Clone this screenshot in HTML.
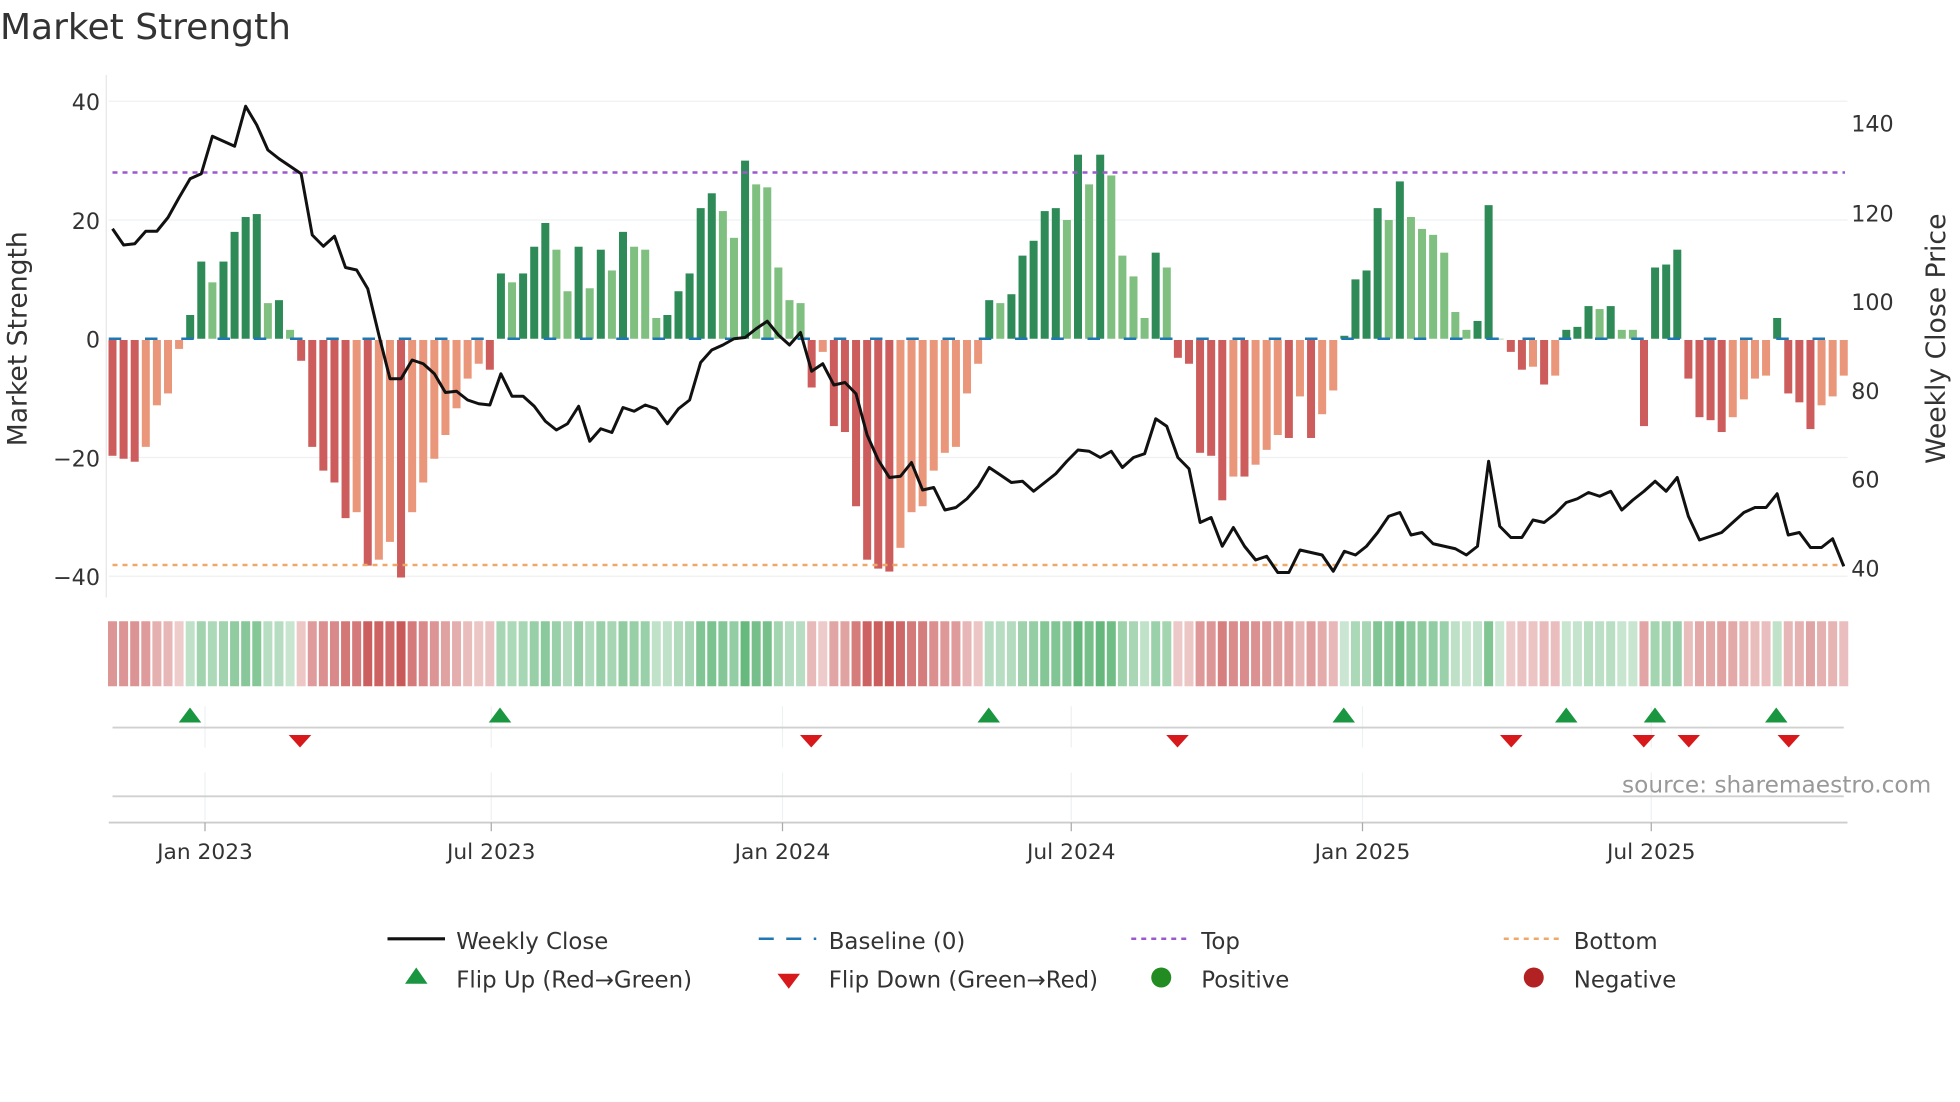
<!DOCTYPE html>
<html><head><meta charset="utf-8"><style>
html,body{margin:0;padding:0;background:#fff;}
svg{display:block;font-family:"DejaVu Sans","Liberation Sans",sans-serif;}
</style></head><body>
<svg id="s" width="1960" height="1102" viewBox="0 0 1568 881.6" preserveAspectRatio="none" xmlns="http://www.w3.org/2000/svg">
<rect width="1568" height="882" fill="#fff"/>
<text x="0" y="31" font-size="28.8" fill="#333">Market Strength</text>
<g stroke="#eef0f2" stroke-width="1">
<line x1="87" y1="81" x2="1478" y2="81"/><line x1="87" y1="176" x2="1478" y2="176"/>
<line x1="87" y1="366" x2="1478" y2="366"/><line x1="87" y1="461" x2="1478" y2="461"/>
</g>
<line x1="85" y1="60" x2="85" y2="478" stroke="#e6e6e6"/>
<g font-size="17.8" fill="#333" text-anchor="end">
<text x="80" y="88">40</text><text x="80" y="183">20</text><text x="80" y="278">0</text>
<text x="80" y="373">−20</text><text x="80" y="468">−40</text>
</g>
<g font-size="17.8" fill="#333">
<text x="1481" y="105">140</text><text x="1481" y="177">120</text><text x="1481" y="248">100</text>
<text x="1481" y="319">80</text><text x="1481" y="390">60</text><text x="1481" y="461">40</text>
</g>
<text transform="translate(21,271) rotate(-90)" font-size="21.3" fill="#333" text-anchor="middle">Market Strength</text>
<text transform="translate(1556,271) rotate(-90)" font-size="21.3" fill="#333" text-anchor="middle">Weekly Close Price</text>
<g id="bars"></g>
<line x1="87" y1="271" x2="1478" y2="271" stroke="#1f77b4" stroke-width="2" stroke-dasharray="10,19"/>
<line x1="90" y1="138" x2="1476" y2="138" stroke="#9b59d0" stroke-width="2" stroke-dasharray="4,4"/>
<line x1="90" y1="452" x2="1476" y2="452" stroke="#f0a868" stroke-width="2" stroke-dasharray="4,4"/>
<polyline id="price" fill="none" stroke="#111" stroke-width="2.4" stroke-linejoin="round"/>
<g id="heat"></g>
<g stroke="#eef0f2"><line x1="164" y1="565" x2="164" y2="598"/><line x1="393" y1="565" x2="393" y2="598"/><line x1="626" y1="565" x2="626" y2="598"/><line x1="857" y1="565" x2="857" y2="598"/><line x1="1090" y1="565" x2="1090" y2="598"/><line x1="1321" y1="565" x2="1321" y2="598"/>
<line x1="164" y1="618" x2="164" y2="656"/><line x1="393" y1="618" x2="393" y2="656"/><line x1="626" y1="618" x2="626" y2="656"/><line x1="857" y1="618" x2="857" y2="656"/><line x1="1090" y1="618" x2="1090" y2="656"/><line x1="1321" y1="618" x2="1321" y2="656"/></g>
<line x1="90" y1="582" x2="1475" y2="582" stroke="#d0d0d0" stroke-width="1.5"/>
<line x1="90" y1="637" x2="1475" y2="637" stroke="#d0d0d0" stroke-width="1.5"/>
<line x1="87" y1="658" x2="1478" y2="658" stroke="#ccc" stroke-width="1.5"/>
<g stroke="#aaa"><line x1="164" y1="658" x2="164" y2="665"/><line x1="393" y1="658" x2="393" y2="665"/><line x1="626" y1="658" x2="626" y2="665"/><line x1="857" y1="658" x2="857" y2="665"/><line x1="1090" y1="658" x2="1090" y2="665"/><line x1="1321" y1="658" x2="1321" y2="665"/></g>
<g id="flips"></g>
<g font-size="17.4" fill="#333" text-anchor="middle">
<text x="164" y="687">Jan 2023</text><text x="393" y="687">Jul 2023</text><text x="626" y="687">Jan 2024</text>
<text x="857" y="687">Jul 2024</text><text x="1090" y="687">Jan 2025</text><text x="1321" y="687">Jul 2025</text>
</g>
<text x="1545" y="634" font-size="18.6" fill="#999" text-anchor="end">source: sharemaestro.com</text>
<g font-size="18.3" fill="#333">
<line x1="310" y1="751" x2="356" y2="751" stroke="#111" stroke-width="2.5"/>
<text x="365" y="759">Weekly Close</text>
<line x1="607" y1="751" x2="653" y2="751" stroke="#1f77b4" stroke-width="2" stroke-dasharray="12,10"/>
<text x="663" y="759">Baseline (0)</text>
<line x1="905" y1="751" x2="950" y2="751" stroke="#9b59d0" stroke-width="2" stroke-dasharray="4,4"/>
<text x="961" y="759">Top</text>
<line x1="1203" y1="751" x2="1248" y2="751" stroke="#f0a868" stroke-width="2" stroke-dasharray="4,4"/>
<text x="1259" y="759">Bottom</text>
<polygon points="333,774 342,787 324,787" fill="#1a9641"/>
<text x="365" y="790">Flip Up (Red→Green)</text>
<polygon points="622,779 640,779 631,791" fill="#d7191c"/>
<text x="663" y="790">Flip Down (Green→Red)</text>
<circle cx="929" cy="782" r="8" fill="#228b22"/>
<text x="961" y="790">Positive</text>
<circle cx="1227" cy="782" r="8" fill="#b22222"/>
<text x="1259" y="790">Negative</text>
</g>
</svg>
<script>
var V=[[-19.5,1],[-20,1],[-20.5,1],[-18,0],[-11,0],[-9,0],[-1.5,0],[4,1],[13,1],[9.5,0],[13,1],[18,1],[20.5,1],[21,1],[6,0],[6.5,1],[1.5,0],
[-3.5,1],[-18,1],[-22,1],[-24,1],[-30,1],[-29,0],[-38,1],[-37,0],[-34,0],[-40,1],[-29,0],[-24,0],[-20,0],[-16,0],[-11.5,0],[-6.5,0],[-4,0],[-5,1],
[11,1],[9.5,0],[11,1],[15.5,1],[19.5,1],[15,0],[8,0],[15.5,1],[8.5,0],[15,1],[11.5,0],[18,1],[15.5,0],[15,0],[3.5,0],[4,1],[8,1],[11,1],[22,1],[24.5,1],[21.5,0],[17,0],[30,1],[26,0],[25.5,0],[12,0],[6.5,0],[6,0],
[-8,1],[-2,0],[-14.5,1],[-15.5,1],[-28,1],[-37,1],[-38.5,1],[-39,1],[-35,0],[-29,0],[-28,0],[-22,0],[-19,0],[-18,0],[-9,0],[-4,0],
[6.5,1],[6,0],[7.5,1],[14,1],[16.5,1],[21.5,1],[22,1],[20,0],[31,1],[26,0],[31,1],[27.5,0],[14,0],[10.5,0],[3.5,0],[14.5,1],[12,0],
[-3,1],[-4,1],[-19,1],[-19.5,1],[-27,1],[-23,0],[-23,1],[-21,0],[-18.5,0],[-16,0],[-16.5,1],[-9.5,0],[-16.5,1],[-12.5,0],[-8.5,0],
[0.5,1],[10,1],[11.5,1],[22,1],[20,0],[26.5,1],[20.5,0],[18.5,0],[17.5,0],[14.5,0],[4.5,0],[1.5,0],[3,1],[22.5,1],
[0,0],[-2,1],[-5,1],[-4.5,0],[-7.5,1],[-6,0],
[1.5,1],[2,1],[5.5,1],[5,0],[5.5,1],[1.5,0],[1.5,0],
[-14.5,1],[12,1],[12.5,1],[15,1],
[-6.5,1],[-13,1],[-13.5,1],[-15.5,1],[-13,0],[-10,0],[-6.5,0],[-6,0],[3.5,1],[-9,1],[-10.5,1],[-15,1],[-11,0],[-9.5,0],[-6,0]];
var NS="http://www.w3.org/2000/svg",n=V.length,x0=90,dx=(1475-90)/(n-1);
function el(p,t,a){var e=document.createElementNS(NS,t);for(var k in a)e.setAttribute(k,a[k]);document.getElementById(p).appendChild(e);}
V.forEach(function(d,i){var v=d[0],x=x0+i*dx,h=Math.abs(v)*4.75,c;
if(v>=0)c=d[1]?"#2e8b57":"#7fbf7f";else c=d[1]?"#cd5c5c":"#e9967a";
el("bars","rect",{x:x-3.2,y:v>=0?271-h:272,width:6.4,height:Math.max(h,0.5),fill:c});
var a=0.25+0.65*Math.min(Math.abs(v)/40,1);
el("heat","rect",{x:x-3.6,y:497,width:7.2,height:52,fill:v>=0?"rgba(50,160,80,"+a+")":"rgba(195,70,70,"+a+")"});});
var P=[183,196,195,185,185,174,158,143,139,109,113,117,85,100,120,127,133,139,188,197,189,214,216,231,268,303,303,288,291,299,314,313,320,323,324,299,317,317,325,337,344,339,325,353,343,346,326,329,324,327,339,327,320,290,280,276,271,270,263,257,268,276,266,297,291,308,306,315,348,368,382,381,370,392,390,408,406,399,389,374,380,386,385,393,386,379,369,360,361,366,361,374,366,363,335,341,366,375,418,414,437,422,437,448,445,458,458,440,442,444,457,441,444,437,426,413,410,428,426,435,437,439,444,437,369,421,430,430,416,418,411,402,399,394,397,393,408,400,393,385,393,382,413,432,429,426,418,410,406,406,395,428,426,438,438,431,453];
var pd=(1475-90)/(P.length-1);
document.getElementById("price").setAttribute("points",P.map(function(y,i){return (90+i*pd).toFixed(1)+","+y}).join(" "));
[152,400,791,1075,1253,1324,1421].forEach(function(x){el("flips","polygon",{points:x+",566 "+(x+9)+",578 "+(x-9)+",578",fill:"#1a9641"});});
[240,649,942,1209,1315,1351,1431].forEach(function(x){el("flips","polygon",{points:(x-9)+",588 "+(x+9)+",588 "+x+",598",fill:"#d7191c"});});
</script>
</body></html>
